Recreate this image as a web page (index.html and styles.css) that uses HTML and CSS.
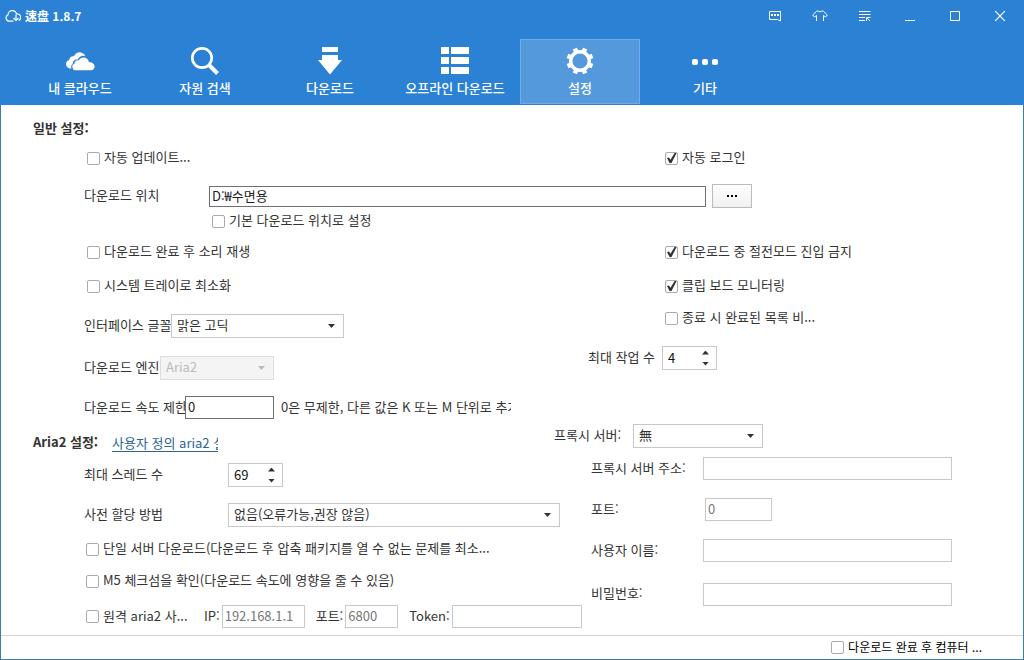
FILE: index.html
```html
<!DOCTYPE html>
<html lang="ko">
<head>
<meta charset="utf-8">
<title>速盘 1.8.7</title>
<link rel="stylesheet" href="styles.css">
</head>
<body>
<div class="window">
  <header class="header">
    <div class="titlebar">
      <svg class="app-icon" width="16" height="12" viewBox="0 0 16 12" fill="none" stroke="currentColor" stroke-width="1.2"><path d="M8.500 11.200H4A3.300 3.300 0 0 1 3 4.900C3 2.600 5 .7 7.300.7c2 0 3.700 1.200 4.200 3.200a3.500 3.500 0 0 1 2.200 6.600M11 4.500v5.700M8.500 8l2.500 2.500L13.500 8"/></svg>
      <h1 class="app-title">速盘 1.8.7</h1>
      <div class="window-buttons">
        <button class="window-button" type="button" aria-label="메시지"><svg width="14" height="12" viewBox="0 0 14 12" fill="none" stroke="currentColor" stroke-width="1"><path d="M1.500 1.500h11v9.500L9.500 9.500H1.500z"/><path d="M3 5h2M6 5h2M9 5h2" stroke-width="2"/></svg></button>
        <button class="window-button" type="button" aria-label="스킨"><svg width="16" height="12" viewBox="0 0 16 12" fill="none" stroke="currentColor"><path d="M4.500 11V5.500L2.500 7 .7 5l4-3.900h1.500q1.800 1.500 3.600 0h1.500l4 3.900-1.800 2-2-1.500V11"/></svg></button>
        <button class="window-button" type="button" aria-label="메뉴"><svg width="12" height="12" viewBox="0 0 12 12" fill="none" stroke="currentColor"><path d="M0 1.500h11.500M0 4.500h11.500M0 7.500h6M0 10.500h6M7.500 11V7.500H11.500M8 8l3 3"/></svg></button>
        <button class="window-button" type="button" aria-label="최소화"><svg width="10" height="12" viewBox="0 0 10 12" fill="none" stroke="currentColor"><path d="M0 10.500h10"/></svg></button>
        <button class="window-button" type="button" aria-label="최대화"><svg width="10" height="10" viewBox="0 0 10 10" fill="none" stroke="currentColor"><path d="M.5.5h9v9h-9z"/></svg></button>
        <button class="window-button" type="button" aria-label="닫기"><svg width="10" height="10" viewBox="0 0 10 10" fill="none" stroke="currentColor" stroke-width="1.200"><path d="M0 0l10 10M10 0L0 10"/></svg></button>
      </div>
    </div>
    <nav class="tabs">
      <button class="tab" type="button"><svg width="30" height="30" viewBox="0 0 30 30" fill="currentColor"><path d="M6.500 22.500H4.500A4.400 4.400 0 0 1 4.200 14C4.400 11.300 6.800 9.700 9 10.300 10.300 7.300 13 6 15.800 6.400c2.200.4 3.700 1.700 4.600 3.500-3.700-.7-6.500 1-7.600 3.600-3.400-.2-5.300 2-5 4.400-1.600.900-2.100 2.800-1.300 4.600z"/><path d="M10.500 24.200a3.300 3.300 0 0 1-1-6.400c-.2-2.400 2-4 4.200-3.300 2.300-4.600 9.500-4 10.300 1.800 3-.2 5.600 1.500 5.600 4.200 0 2.200-1.600 3.700-3.800 3.700z"/></svg><span>내 클라우드</span></button>
      <button class="tab" type="button"><svg width="30" height="30" viewBox="0 0 30 30" fill="none" stroke="currentColor"><circle cx="12" cy="12" r="9.700" stroke-width="2.700"/><path d="M18.500 18.500l9 9" stroke-width="4"/></svg><span>자원 검색</span></button>
      <button class="tab" type="button"><svg width="30" height="30" viewBox="0 0 30 30" fill="currentColor"><path d="M7 1h16v5H7zM7 9h16v5h4L15 28.500 3 14h4z"/></svg><span>다운로드</span></button>
      <button class="tab" type="button"><svg width="30" height="30" viewBox="0 0 30 30" fill="currentColor"><path d="M1 1h8v7H1zM11 1h18v7H11zM1 11h8v7H1zM11 11h18v7H11zM1 21h8v7H1zM11 21h18v7H11z"/></svg><span>오프라인 다운로드</span></button>
      <button class="tab tab-active" type="button" aria-current="page"><svg width="30" height="30" viewBox="0 0 30 30"><circle cx="15" cy="15" r="9.300" fill="none" stroke="currentColor" stroke-width="3.400"/><g fill="currentColor"><path id="teeth" d="M12.700 5.500V1.500h4.600v4zM12.700 24.500v4h4.600v-4zM5.500 12.700h-4v4.600h4zM24.500 12.700h4v4.600h-4z" transform="rotate(22.500 15 15)"/><use href="#teeth" transform="rotate(45 15 15)"/></g></svg><span>설정</span></button>
      <button class="tab" type="button"><svg width="30" height="30" viewBox="0 0 30 30" fill="currentColor"><rect x="2" y="13" width="6" height="6" rx="2"/><rect x="12" y="13" width="6" height="6" rx="2"/><rect x="22" y="13" width="6" height="6" rx="2"/></svg><span>기타</span></button>
    </nav>
  </header>

  <main class="settings">
    <h2 class="section-title">일반 설정:</h2>
    <div class="split general-top">
      <label class="check"><input type="checkbox">자동 업데이트...</label>
      <label class="check option-right"><input type="checkbox" checked>자동 로그인</label>
    </div>
    <div class="path-row">
      <label class="path-label" for="path">다운로드 위치</label>
      <input class="field field-dark path-input" id="path" type="text" value="D:₩수면용">
      <button class="browse" type="button" aria-label="찾아보기"><svg width="12" height="2" viewBox="0 0 12 2"><path d="M1 0h2v2H1zM5 0h2v2H5zM9 0h2v2H9z"/></svg></button>
    </div>
    <label class="check default-path"><input type="checkbox">기본 다운로드 위치로 설정</label>

    <div class="split general">
      <div class="stack">
        <label class="check"><input type="checkbox">다운로드 완료 후 소리 재생</label>
        <label class="check gap-m"><input type="checkbox">시스템 트레이로 최소화</label>
        <div class="row gap-xl">
          <label class="font-label" for="font">인터페이스 글꼴</label>
          <select class="select select-font" id="font"><option>맑은 고딕</option></select>
        </div>
        <div class="row gap-xl">
          <label class="engine-label" for="engine">다운로드 엔진</label>
          <select class="select select-engine" id="engine" disabled><option>Aria2</option></select>
        </div>
        <div class="row gap-l">
          <label class="limit-label" for="limit">다운로드 속도 제한</label>
          <input class="field field-dark limit-input" id="limit" type="text" value="0">
          <span class="limit-hint">0은 무제한, 다른 값은 K 또는 M 단위로 추가</span>
        </div>
      </div>
      <div class="stack">
        <label class="check option-right"><input type="checkbox" checked>다운로드 중 절전모드 진입 금지</label>
        <label class="check option-right gap-m"><input type="checkbox" checked>클립 보드 모니터링</label>
        <label class="check option-right gap-s"><input type="checkbox">종료 시 완료된 목록 비...</label>
        <div class="row gap-xl">
          <label class="tasks-label" for="tasks">최대 작업 수</label>
          <div class="spin"><input id="tasks" type="text" inputmode="numeric" value="4"><span class="spin-buttons"><button type="button" class="spin-up" aria-label="늘리기"></button><button type="button" class="spin-down" aria-label="줄이기"></button></span></div>
        </div>
      </div>
    </div>

    <div class="aria-head">
      <h2 class="section-title">Aria2 설정:</h2>
      <a class="custom-link" href="#">사용자 정의 aria2 설정</a>
      <div class="row proxy-kind">
        <label for="proxy">프록시 서버:</label>
        <select class="select select-proxy" id="proxy"><option>無</option></select>
      </div>
    </div>

    <div class="split">
      <div class="stack aria">
        <div class="row">
          <label class="aria-label" for="threads">최대 스레드 수</label>
          <div class="spin"><input id="threads" type="text" inputmode="numeric" value="69"><span class="spin-buttons"><button type="button" class="spin-up" aria-label="늘리기"></button><button type="button" class="spin-down" aria-label="줄이기"></button></span></div>
        </div>
        <div class="row gap-l">
          <label class="aria-label" for="alloc">사전 할당 방법</label>
          <select class="select select-alloc" id="alloc"><option>없음(오류가능,권장 않음)</option></select>
        </div>
        <label class="check gap-s"><input type="checkbox">단일 서버 다운로드(다운로드 후 압축 패키지를 열 수 없는 문제를 최소...</label>
        <label class="check gap-s"><input type="checkbox">M5 체크섬을 확인(다운로드 속도에 영향을 줄 수 있음)</label>
        <div class="row remote gap-m">
          <label class="check remote-check"><input type="checkbox">원격 aria2 사...</label>
          <label class="remote-label" for="ip">IP:</label>
          <input class="field ip-input" id="ip" type="text" value="192.168.1.1">
          <label class="remote-label" for="rport">포트:</label>
          <input class="field rport-input" id="rport" type="text" value="6800">
          <label class="remote-label" for="token">Token:</label>
          <input class="field token-input" id="token" type="text">
        </div>
      </div>
      <div class="proxy">
        <label for="host">프록시 서버 주소:</label><input class="field" id="host" type="text">
        <label for="port">포트:</label><input class="field port-input" id="port" type="text" value="0">
        <label for="user">사용자 이름:</label><input class="field" id="user" type="text">
        <label for="pass">비밀번호:</label><input class="field" id="pass" type="password">
      </div>
    </div>
  </main>

  <footer class="footer">
    <label class="check"><input type="checkbox">다운로드 완료 후 컴퓨터 ...</label>
  </footer>
</div>
</body>
</html>
```
FILE: styles.css
```css
* { box-sizing: border-box; }

body {
  margin: 0;
  color: #333;
  font: 13px/20px "Noto Sans CJK KR", sans-serif;
}

button, input, select { font: inherit; color: inherit; margin: 0; }
button { padding: 0; border: 0; background: none; }

.window {
  display: flex;
  flex-direction: column;
  min-height: 100vh;
  border: 1px solid #3a7cb8;
  border-top: 0;
  background: #fff;
}

/* Header */
.header {
  margin: 0 -1px;
  padding-bottom: 1px;
  background: #2b81d4;
  color: #fff;
}
.titlebar {
  display: flex;
  align-items: center;
  height: 32px;
  padding: 0 2px 0 5px;
}
.app-title {
  margin: 0 0 0 4px;
  font: 700 12px/20px "Noto Sans CJK SC", sans-serif;
}
.window-buttons { display: flex; margin-left: auto; }
.window-button {
  display: grid;
  place-items: center;
  width: 45px;
  height: 32px;
}
.tabs { display: flex; gap: 5px; padding: 7px 20px 0; }
.tab {
  display: flex;
  flex-direction: column;
  align-items: center;
  gap: 3px;
  width: 120px;
  height: 65px;
  padding-top: 6px;
  border: 1px solid transparent;
  font-weight: 500;
  line-height: 18px;
}
.tab-active { background: #5599dd; border-color: #73abe4; }

/* Layout */
.settings { flex: 1; padding-top: 13px; }
.section-title { margin: 0 0 0 32px; font-size: 13px; font-weight: 700; }
.split { display: grid; grid-template-columns: 587px 1fr; }
.stack { display: flex; flex-direction: column; align-items: flex-start; padding-left: 83px; }
.stack + .stack { padding-left: 0; }
.row { display: flex; align-items: center; white-space: nowrap; }
.gap-s { margin-top: 12px; }
.gap-m { margin-top: 14px; }
.gap-l { margin-top: 16px; }
.gap-xl { margin-top: 18px; }

/* Controls */
label { padding-bottom: 2px; }
.check {
  display: flex;
  align-items: center;
  gap: 4px;
  padding-left: 3px;
  line-height: 18px;
  white-space: nowrap;
}
.check input {
  appearance: none;
  flex: none;
  width: 13px;
  height: 13px;
  margin-top: 2px;
  border: 1px solid #aaa;
  border-radius: 2px;
  background: #fff;
}
.check input:checked::after {
  content: "";
  display: block;
  width: 11px;
  height: 11px;
  background: #333;
  clip-path: polygon(9% 50%, 27% 45%, 41% 65%, 78% 5%, 96% 5%, 50% 96%, 32% 96%);
}
.field {
  height: 23px;
  padding: 0 2px 2px;
  border: 1px solid #c8c8c8;
  border-radius: 0;
  background: #fff;
  color: #777;
  line-height: 18px;
}
.field-dark { border-color: #707070; color: #222; }
.select {
  appearance: none;
  height: 24px;
  padding: 0 24px 2px 5px;
  border: 1px solid #c8c8c8;
  border-radius: 0;
  background: #fff url("data:image/svg+xml,%3Csvg xmlns='http://www.w3.org/2000/svg' width='7' height='4'%3E%3Cpath d='M0 0h7L3.5 4z' fill='%23333'/%3E%3C/svg%3E") no-repeat right 8px center;
}
.select:disabled {
  border-color: #ddd;
  background: #f4f4f4 url("data:image/svg+xml,%3Csvg xmlns='http://www.w3.org/2000/svg' width='7' height='4'%3E%3Cpath d='M0 0h7L3.5 4z' fill='%23bbb'/%3E%3C/svg%3E") no-repeat right 8px center;
  color: #bbb;
  opacity: 1;
}
.spin {
  display: flex;
  width: 55px;
  height: 24px;
  border: 1px solid #c8c8c8;
}
.spin input {
  flex: 1;
  min-width: 0;
  padding: 0 0 0 5px;
  border: 0;
  color: #111;
}
.spin-buttons { display: flex; flex-direction: column; width: 21px; }
.spin-buttons button { flex: 1; display: grid; place-items: center; }
.spin-buttons button::before {
  content: "";
  width: 7px;
  height: 4px;
  background: #333;
}
.spin-up::before { clip-path: polygon(50% 0, 100% 100%, 0 100%); }
.spin-down::before { clip-path: polygon(0 0, 100% 0, 50% 100%); }

/* General section */
.general-top { margin-top: 10px; padding-left: 83px; grid-template-columns: 504px 1fr; }
.option-right { margin-left: 74px; }
.path-row {
  display: flex;
  align-items: center;
  margin-top: 16px;
  padding: 0 271px 0 83px;
}
.path-label { width: 125px; }
.path-input { flex: 1; min-width: 0; height: 21px; }
.browse {
  display: grid;
  place-items: center;
  width: 40px;
  height: 24px;
  margin-left: 6px;
  border: 1px solid #bbb;
  background: linear-gradient(#fff, #f0f0f0);
}
.default-path { margin-top: 3px; padding-left: 211px; }
.general { margin-top: 11px; }
.font-label { width: 87px; }
.select-font { width: 173px; }
.engine-label { width: 76px; }
.select-engine { width: 114px; }
.limit-label { width: 101px; overflow: hidden; }
.limit-input { width: 89px; }
.limit-hint { width: 230px; margin-left: 7px; padding-bottom: 2px; overflow: hidden; }
.tasks-label { width: 74px; }

/* Aria2 section */
.aria-head { display: flex; align-items: flex-end; height: 28px; margin-top: 5px; }
.aria-head .section-title { width: 79px; }
.custom-link {
  width: 106px;
  overflow: hidden;
  border-bottom: 1px solid #2a6496;
  color: #2a6496;
  line-height: 17px;
  text-decoration: none;
  white-space: nowrap;
}
.proxy-kind { align-self: flex-start; gap: 12px; margin-left: 336px; }
.select-proxy { width: 130px; }
.aria { padding-top: 11px; }
.aria > .check { padding-left: 2px; }
.aria-label { width: 144px; }
.select-alloc { width: 332px; }
.remote-check { width: 120px; padding-left: 2px; }
.remote-label { margin-right: 2px; }
.ip-input { width: 83px; margin-right: 11px; }
.rport-input { width: 53px; margin-right: 11px; }
.token-input { width: 130px; }
.proxy {
  display: grid;
  grid-template-columns: 112px minmax(0, 249px);
  grid-template-rows: 23px 23px 23px 28px;
  align-content: start;
  align-items: center;
  row-gap: 18px;
  padding: 5px 24px 0 3px;
}
.port-input { width: 67px; margin-left: 2px; }

/* Footer */
.footer {
  display: flex;
  justify-content: flex-end;
  align-items: center;
  height: 24px;
  padding-right: 41px;
  border-top: 1px solid #d4d4d4;
  color: #000;
  font-size: 12px;
}
```
